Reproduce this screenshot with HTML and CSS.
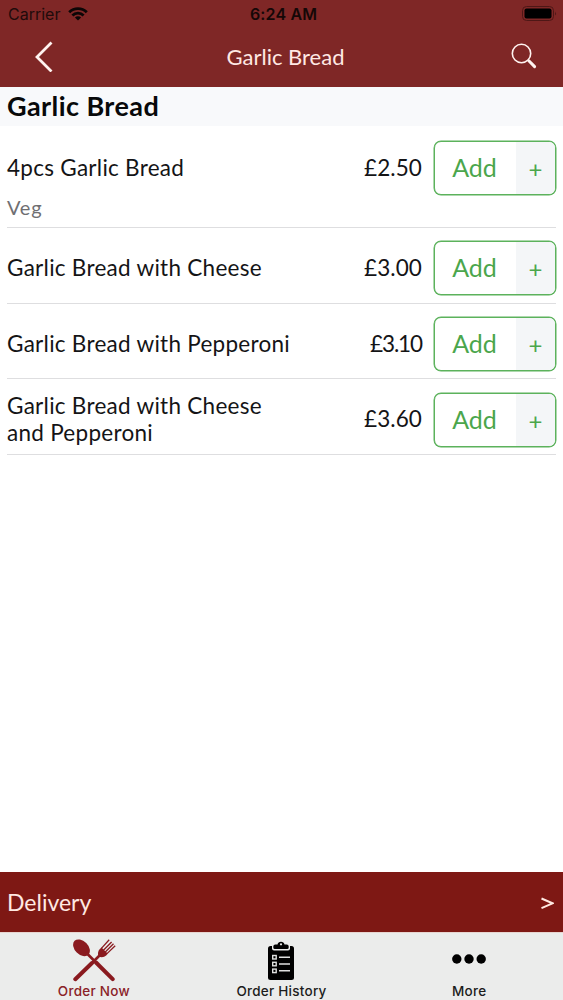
FILE: index.html
```html
<!DOCTYPE html>
<html lang="en">
<head>
  <meta charset="UTF-8">
  <title>Garlic Bread</title>
  <link rel="stylesheet" href="styles.css">
</head>
<body>
  <!-- Header -->
  <header class="header">
    <div class="status">
      <div class="carrier">
        <span>Carrier</span>
        <svg width="20" height="14" viewBox="0 0 20 14" fill="none" stroke="#0c0606" stroke-width="2.8">
          <path d="M1.2 5.2a12.6 12.6 0 0 1 17.6 0"/>
          <path d="M4.4 8.5a8 8 0 0 1 11.2 0"/>
          <path d="M10 13.6L6.9 10.5a4.4 4.4 0 0 1 6.2 0z" fill="#0c0606" stroke="none"/>
        </svg>
      </div>
      <span class="time">6:24 AM</span>
      <svg class="battery" width="35" height="15" viewBox="0 0 35 15">
        <rect x=".5" y=".5" width="31" height="14" rx="4" fill="none" stroke="#4e1716"/>
        <rect x="2.5" y="2.5" width="27" height="10" rx="2" fill="#000"/>
        <path d="M33 5.5q1.8 2 0 4z" fill="#4e1716"/>
      </svg>
    </div>
    <div class="nav">
      <svg width="20" height="32" viewBox="0 0 20 32" fill="none" stroke="#fff3f0" stroke-width="2.8">
        <path d="M17.5 2.5L3 17l14.500 14.500"/>
      </svg>
      <h1>Garlic Bread</h1>
      <svg width="26" height="26" viewBox="0 0 26 26" fill="none" stroke="#fff3f0">
        <circle cx="10.5" cy="10.5" r="9.2" stroke-width="1.6"/>
        <path d="M17 17l1.5 1.5" stroke-width="1.6"/>
        <path d="M17.8 17.8l5.800 5.800" stroke-width="3" stroke-linecap="round"/>
      </svg>
    </div>
  </header>

  <!-- Menu items -->
  <main class="menu">
    <h2>Garlic Bread</h2>
    <div class="item first">
      <div class="row">
        <span class="name">4pcs Garlic Bread</span>
        <span class="price">£2.50</span>
        <button class="add"><span>Add</span><span class="plus">+</span></button>
      </div>
      <p class="note">Veg</p>
    </div>
    <div class="item">
      <div class="row">
        <span class="name">Garlic Bread with Cheese</span>
        <span class="price">£3.00</span>
        <button class="add"><span>Add</span><span class="plus">+</span></button>
      </div>
    </div>
    <div class="item">
      <div class="row">
        <span class="name">Garlic Bread with Pepperoni</span>
        <span class="price narrow">£3.10</span>
        <button class="add"><span>Add</span><span class="plus">+</span></button>
      </div>
    </div>
    <div class="item">
      <div class="row">
        <span class="name">Garlic Bread with Cheese<br>and Pepperoni</span>
        <span class="price">£3.60</span>
        <button class="add"><span>Add</span><span class="plus">+</span></button>
      </div>
    </div>
  </main>

  <!-- Delivery bar -->
  <div class="delivery">
    <span>Delivery</span>
    <svg width="13" height="13" viewBox="0 0 13 13" fill="none" stroke="#ffe9e2" stroke-width="2">
      <path d="M.5 2.500l11 4.800-11 4.800"/>
    </svg>
  </div>

  <!-- Tabs -->
  <nav class="tabs">
    <a class="tab active">
      <svg width="44" height="44" viewBox="0 0 44 44" fill="#8a1a1f" stroke="#8a1a1f">
        <!-- spoon -->
        <ellipse cx="9.500" cy="9.800" rx="9.800" ry="6.700" transform="rotate(45 9.5 9.8)" stroke="none"/>
        <path d="M14 14.500L25 25.500" stroke-width="2.6"/>
        <path d="M24 24.500L40.700 41.200" stroke-width="4" stroke-linecap="round"/>
        <!-- fork -->
        <path d="M26.500 18.500q-1.500-4.500 1.300-7.500l1.700-1.600 6.300 6.300-1.600 1.700q-3 2.800-7.700 1.100z" stroke="none"/>
        <path d="M29.400 10.400l7.800-8.700M31.400 12.200l8.200-8.200M33.300 14l8.200-8.200M35 15.600l8.200-7.800" stroke-width="1.300"/>
        <path d="M29 16L19 26" stroke-width="2.6"/>
        <path d="M20 25L3.300 41.200" stroke-width="4" stroke-linecap="round"/>
      </svg>
      <span>Order Now</span>
    </a>
    <a class="tab">
      <svg width="28" height="42" viewBox="0 0 28 42">
        <rect x="1" y="7" width="26" height="34" rx="2.5" fill="#000"/>
        <path d="M5 6h18v3.500q0 2-2 2H7q-2 0-2-2z" fill="#ebeceb"/>
        <path d="M6.300 7.500q0-2 2-2h2.200a3.600 3.600 0 0 1 7 0h2.200q2 0 2 2v1q0 1.500-1.500 1.500H7.800q-1.500 0-1.500-1.500z" fill="#000"/>
        <circle cx="14" cy="5.3" r="1.1" fill="#ebeceb"/>
        <g fill="#000" stroke="#dfe0df" stroke-width="1.4">
          <rect x="5.7" y="16.5" width="3.5" height="3.5"/>
          <rect x="5.7" y="23.3" width="3.5" height="3.5"/>
          <rect x="5.7" y="30.1" width="3.5" height="3.5"/>
          <path d="M12 18.200h11M12 25h11M12 31.800h11"/>
        </g>
      </svg>
      <span>Order History</span>
    </a>
    <a class="tab">
      <svg width="34" height="42" viewBox="0 0 34 42" fill="#000">
        <circle cx="4.8" cy="20" r="4.7"/>
        <circle cx="17" cy="20" r="4.7"/>
        <circle cx="29.2" cy="20" r="4.7"/>
      </svg>
      <span>More</span>
    </a>
  </nav>
</body>
</html>
```
FILE: styles.css
```css
* { box-sizing: border-box; }
body { margin: 0; height: 1000px; display: flex; flex-direction: column; background: #fff; color: #141416; font-family: Lato, "Open Sans", sans-serif; font-size: 22px; }
h1, h2, p { margin: 0; }
svg { display: block; flex: none; }

/* header */
.header { height: 87px; background: #7f2726; }
.status { height: 27px; padding: 0 6px 0 8px; display: grid; grid-template-columns: 1fr auto 1fr; align-items: center; font-family: Inter, sans-serif; font-size: 16px; color: #210b0b; }
.carrier { display: flex; align-items: center; gap: 8px; }
.time { padding-left: 2px; font-weight: 600; color: #150707; letter-spacing: .15px; }
.battery { justify-self: end; }
.nav { height: 58px; padding: 0 26px 0 34px; display: grid; grid-template-columns: 1fr auto 1fr; align-items: center; color: #ffe9e4; }
.nav h1 { font-size: 22px; font-weight: 400; }
.nav svg:last-child { justify-self: end; }

/* menu */
.menu { flex: 1; }
.menu h2 { height: 39px; padding-left: 7px; line-height: 38px; font-size: 27px; font-weight: 700; letter-spacing: .42px; background: #f8f9fb; color: #08090a; }
.item { margin: 0 7px; padding: 13px 0 7px; border-bottom: 1px solid #dedee0; }
.first { padding-top: 15px; }
.row { display: flex; align-items: center; height: 54.7px; }
.name { flex: 1; padding-bottom: 2px; line-height: 27px; font-size: 22.5px; letter-spacing: .27px; }
.price { margin-right: 12px; padding-bottom: 2px; font-size: 22.5px; letter-spacing: .1px; }
.narrow { letter-spacing: -1.1px; }
.add { width: 122px; height: 54px; padding: 0; display: flex; border: 1px solid #5cb25c; border-radius: 7px; box-shadow: 0 0 0 .5px #5cb25c; background: #fff; overflow: hidden; font-family: inherit; font-size: 25px; color: #4ba64c; }
.add span { flex: 1; padding-right: 2px; line-height: 51px; }
.add .plus { flex: 0 0 39px; padding: 1px 0 0; background: #f4f6f8; font-size: 24px; }
.note { margin-top: -.7px; line-height: 25px; font-size: 20px; letter-spacing: .8px; color: #6f6f72; }

/* bottom */
.delivery { height: 60px; padding: 0 9px 0 7px; display: flex; align-items: center; justify-content: space-between; background: #7e1814; color: #ffe9e2; font-size: 23px; }
.tabs { height: 68px; padding-top: 5px; display: grid; grid-template-columns: repeat(3, 1fr); background: #ebeceb; border-top: 1px solid #e8d5d0; font-family: Inter, sans-serif; font-size: 13.5px; font-weight: 500; letter-spacing: .25px; color: #1c1c1c; }
.tab { display: flex; flex-direction: column; align-items: center; }
.tab svg { height: 44px; }
.tab span { line-height: 18px; }
.active { color: #8a2227; }
```
